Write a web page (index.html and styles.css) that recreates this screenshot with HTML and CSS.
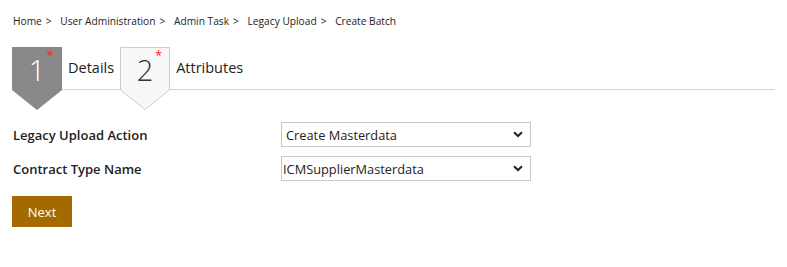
FILE: index.html
```html
<!DOCTYPE html>
<html lang="en">
<head>
  <meta charset="UTF-8">
  <title>Create Batch</title>
  <link rel="stylesheet" href="styles.css">
</head>
<body>
  <div class="crumbs">
    <span>Home</span><span class="sep">&gt;</span>
    <span>User Administration</span><span class="sep">&gt;</span>
    <span>Admin Task</span><span class="sep">&gt;</span>
    <span>Legacy Upload</span><span class="sep">&gt;</span>
    <span>Create Batch</span>
  </div>

  <div class="steps">
    <div class="step active">
      <div class="badge">
        <svg class="shape" width="50" height="64" viewBox="0 0 50 64">
          <polygon points="0,0 50,0 50,43 25,63 0,43" fill="#888888"/>
        </svg>
        <span class="num">1</span>
        <span class="req">*</span>
      </div>
      <span class="step-title">Details</span>
    </div>
    <div class="step">
      <div class="badge">
        <svg class="shape" width="50" height="64" viewBox="0 0 50 64">
          <polygon points="0.5,0.5 49.5,0.5 49.5,43 25,62.5 0.5,43" fill="#f7f7f7" stroke="#cccccc"/>
        </svg>
        <span class="num">2</span>
        <span class="req">*</span>
      </div>
      <span class="step-title">Attributes</span>
    </div>
  </div>

  <form class="form">
    <div class="row">
      <label for="action">Legacy Upload Action</label>
      <div class="select-wrap">
        <select id="action">
          <option>Create Masterdata</option>
        </select>
        <svg class="chev" width="10" height="7" viewBox="0 0 10 7"><path d="M1 1.2 L5 5 L9 1.2" fill="none" stroke="#222" stroke-width="2"/></svg>
      </div>
    </div>
    <div class="row">
      <label for="ctype">Contract Type Name</label>
      <div class="select-wrap tight">
        <select id="ctype">
          <option>ICMSupplierMasterdata</option>
        </select>
        <svg class="chev" width="10" height="7" viewBox="0 0 10 7"><path d="M1 1.2 L5 5 L9 1.2" fill="none" stroke="#222" stroke-width="2"/></svg>
      </div>
    </div>
    <button type="button" class="next">Next</button>
  </form>
</body>
</html>
```

FILE: styles.css
```css
body { margin: 0; padding: 0 12px; font-family: "Open Sans", sans-serif; color: #222; background: #fff; }
.crumbs { font-size: 10.2px; padding-top: 13px; height: 22px; line-height: 16px; color: #222; padding-left: 1px; }
.crumbs .sep { margin: 0 6px 0 4px; }
.steps { display: flex; align-items: flex-start; border-bottom: 1px solid #d4d4d4; height: 42px; margin-top: 12px; }
.step { display: flex; align-items: flex-start; }
.badge { position: relative; width: 50px; height: 42px; }
.badge .shape { position: absolute; left: 0; top: 0; }
.badge .num { position: relative; display: block; text-align: center; font-size: 29px; font-weight: 300; line-height: 46px; color: #333; }
.step.active .badge .num { color: #fff; }
.badge .req { position: absolute; right: 8px; top: 2px; color: #ff2020; font-size: 13px; line-height: 13px; }
.step-title { font-size: 14.5px; padding: 11px 6px 0 6px; color: #222; }
.form { margin-top: 32px; }
.row { display: flex; align-items: center; margin-bottom: 9px; }
.row label { width: 268px; padding-left: 1px; font-size: 13px; font-weight: 600; color: #222; }
.select-wrap { position: relative; width: 250px; height: 25px; }
.select-wrap select { appearance: none; -webkit-appearance: none; width: 100%; height: 100%; font-family: "Open Sans", sans-serif; font-size: 12.8px; color: #222; border: 1px solid #c8c8c8; background: #fff; padding: 0 4px; border-radius: 0; outline: none; }
.select-wrap.tight select { padding: 0 0 0 1px; }
.select-wrap .chev { position: absolute; right: 8px; top: 9px; pointer-events: none; }
.next { margin-top: 6px; width: 60px; height: 31px; border: 0; background: #a36a00; color: #fff; font-family: "Open Sans", sans-serif; font-size: 13px; padding: 0; cursor: pointer; }
```
